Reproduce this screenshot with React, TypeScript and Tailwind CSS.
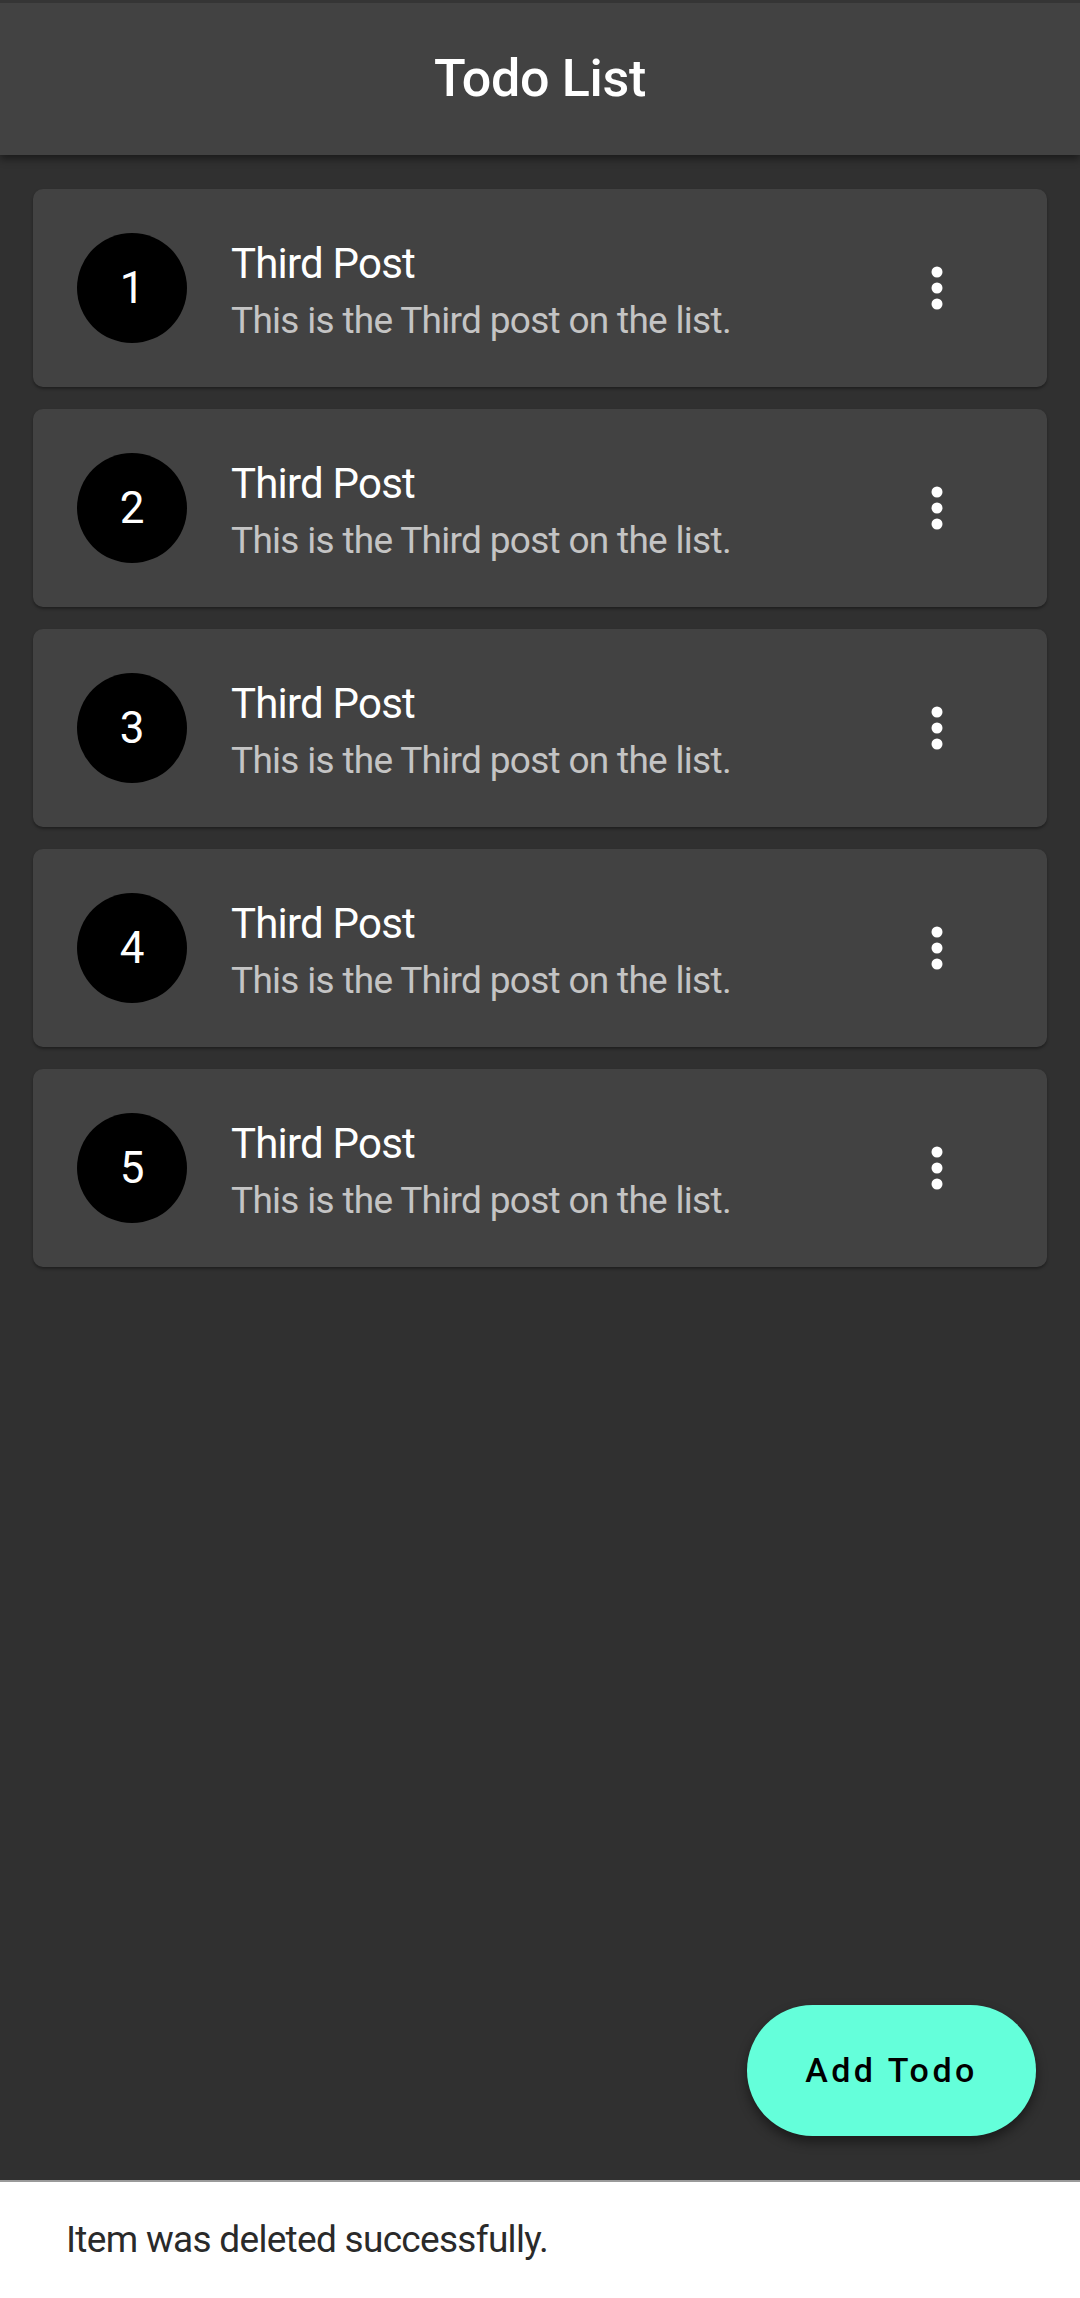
const todos = [1, 2, 3, 4, 5].map((n) => ({
  id: n,
  title: "Third Post",
  description: "This is the Third post on the list.",
}));

function MoreIcon() {
  return (
    <svg width="22" height="50" viewBox="0 0 22 50" fill="#ffffff">
      <circle cx="11" cy="9" r="5.5" />
      <circle cx="11" cy="25" r="5.5" />
      <circle cx="11" cy="41" r="5.5" />
    </svg>
  );
}

function TodoCard({ id, title, description }: { id: number; title: string; description: string }) {
  return (
    <div className="flex h-[198px] items-center rounded-[10px] bg-[#424242] pl-[44px] shadow-[0_2px_3px_rgba(0,0,0,0.35)]">
      <div className="flex h-[110px] w-[110px] shrink-0 items-center justify-center rounded-full bg-black text-[44px] leading-none text-white">
        {id}
      </div>
      <div className="ml-[44px] mt-[6px] flex flex-1 flex-col">
        <p className="text-[42px] leading-[48px] tracking-[-0.8px] text-white">{title}</p>
        <p className="mt-[11px] text-[37px] leading-[44px] tracking-[-0.7px] text-[#c4c4c4]">{description}</p>
      </div>
      <div className="mr-[99px] flex items-center">
        <MoreIcon />
      </div>
    </div>
  );
}

export default function App() {
  return (
    <div className="flex h-[2298px] w-[1080px] flex-col bg-[#303030] font-['Roboto',sans-serif]">
      <header className="relative z-10 flex h-[155px] shrink-0 items-center justify-center border-t-[3px] border-[#353535] bg-[#424242] shadow-[0_4px_8px_rgba(0,0,0,0.45)]">
        <h1 className="text-[52px] font-medium leading-none tracking-[-0.3px] text-white">Todo List</h1>
      </header>

      <main className="flex flex-1 flex-col">
        <div className="mx-[33px] mt-[34px] flex flex-col gap-[22px]">
          {todos.map((todo) => (
            <TodoCard key={todo.id} {...todo} />
          ))}
        </div>

        <button className="mb-[44px] mr-[44px] mt-auto flex h-[131px] w-[289px] items-center justify-center self-end rounded-full bg-[#64ffda] text-[34px] font-medium tracking-[3.5px] text-black shadow-[0_6px_12px_rgba(0,0,0,0.45)]">
          Add Todo
        </button>
      </main>

      <div className="flex h-[118px] shrink-0 items-center border-t-[2px] border-[#9a9a9a] bg-white pl-[66px]">
        <p className="text-[37px] leading-[44px] tracking-[-0.7px] text-[#2a2a2a]">Item was deleted successfully.</p>
      </div>
    </div>
  );
}
